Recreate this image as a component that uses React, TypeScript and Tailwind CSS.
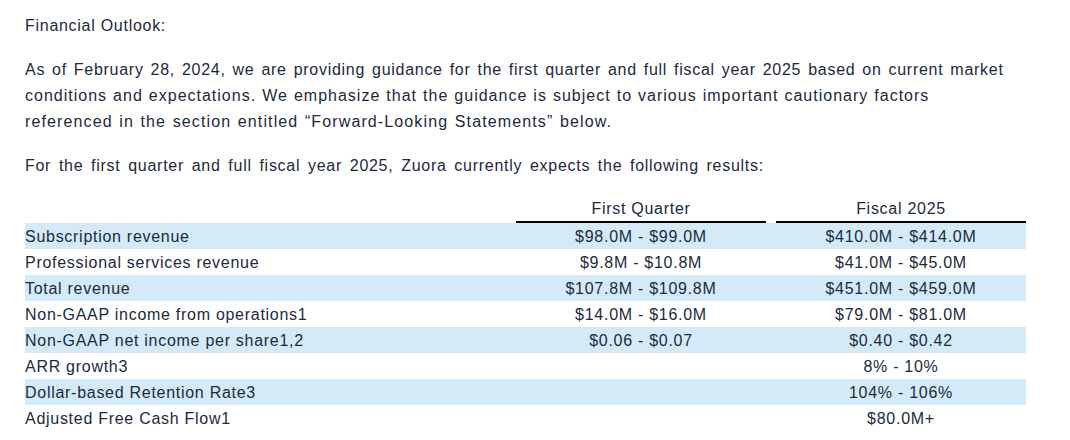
import React from "react";

const rows: [string, string, string][] = [
  ["Subscription revenue", "$98.0M - $99.0M", "$410.0M - $414.0M"],
  ["Professional services revenue", "$9.8M - $10.8M", "$41.0M - $45.0M"],
  ["Total revenue", "$107.8M - $109.8M", "$451.0M - $459.0M"],
  ["Non-GAAP income from operations1", "$14.0M - $16.0M", "$79.0M - $81.0M"],
  ["Non-GAAP net income per share1,2", "$0.06 - $0.07", "$0.40 - $0.42"],
  ["ARR growth3", "", "8% - 10%"],
  ["Dollar-based Retention Rate3", "", "104% - 106%"],
  ["Adjusted Free Cash Flow1", "", "$80.0M+"],
];

export default function App() {
  return (
    <div
      className="w-[1070px] h-[440px] overflow-hidden bg-white text-[#1c2a3c] text-[16px] leading-[26px] tracking-[0.72px] pt-[13px] pl-[25px]"
      style={{ fontFamily: '"Liberation Sans", Arial, sans-serif' }}
    >
      <p>Financial Outlook:</p>
      <p className="mt-[18px] w-[1040px] whitespace-nowrap">
        <span className="[word-spacing:1.8px]">
          As of February 28, 2024, we are providing guidance for the first quarter and full fiscal year 2025 based on current market
        </span>
        <br />
        <span className="[word-spacing:0.6px] tracking-[1px]">
          conditions and expectations. We emphasize that the guidance is subject to various important cautionary factors
        </span>
        <br />
        <span className="[word-spacing:1px] tracking-[1.12px]">
          referenced in the section entitled “Forward-Looking Statements” below.
        </span>
      </p>
      <p className="mt-[18px] [word-spacing:2.6px]">
        For the first quarter and full fiscal year 2025, Zuora currently expects the following results:
      </p>
      <div className="mt-[18px] grid grid-cols-[491px_250px_10px_250px] w-[1001px]">
        <div className="h-[26px]" />
        <div className="h-[26px] leading-[24px] text-center border-b-2 border-black">First Quarter</div>
        <div className="h-[26px]" />
        <div className="h-[26px] leading-[24px] text-center border-b-2 border-black">Fiscal 2025</div>
        {rows.map((r, i) => {
          const bg = i % 2 === 0 ? "bg-[#d4eaf9]" : "bg-white";
          return (
            <React.Fragment key={i}>
              <div className={`${bg} h-[26px] leading-[28px]`}>{r[0]}</div>
              <div className={`${bg} h-[26px] leading-[28px] text-center`}>{r[1]}</div>
              <div className={`${bg} h-[26px]`} />
              <div className={`${bg} h-[26px] leading-[28px] text-center`}>{r[2]}</div>
            </React.Fragment>
          );
        })}
      </div>
    </div>
  );
}
